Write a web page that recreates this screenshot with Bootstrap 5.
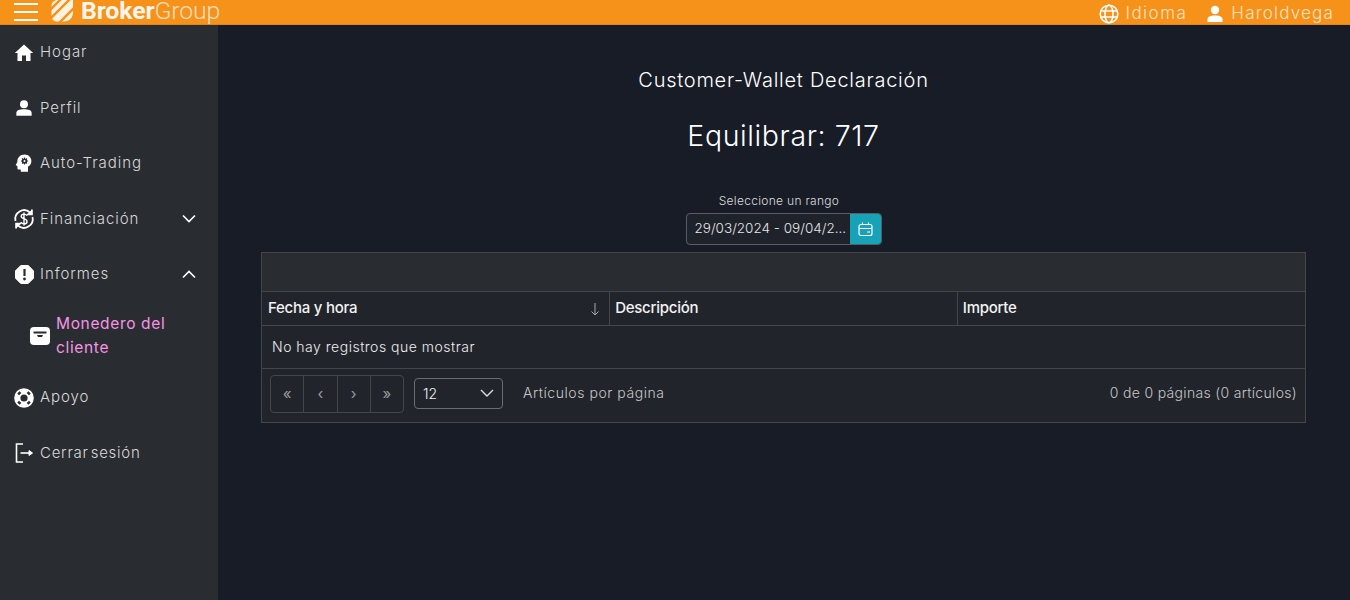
<!DOCTYPE html>
<html lang="es">
<head>
    <meta charset="UTF-8">
    <meta name="viewport" content="width=device-width, initial-scale=1.0">
    <title>Customer-Wallet Declaración</title>
    <link href="https://cdn.jsdelivr.net/npm/bootstrap@5.3.0/dist/css/bootstrap.min.css" rel="stylesheet">
    <style>
        html, body { height: 100%; overflow: hidden; }
        body { background: #181c27; color: #f2f2f2; font-family: "Inter", "Liberation Sans", sans-serif; font-size: 15px; }
        svg { display: block; flex-shrink: 0; }
        .top-bar { height: 25px; background: #f6911a; border-bottom: 1px solid #e0861a; padding: 0 16px 0 14px; }
        .burger { width: 24px; }
        .burger span { display: block; height: 2px; background: #fff; margin-bottom: 6px; }
        .burger span:last-child { margin-bottom: 0; }
        .brand { font-family: "Roboto", "Liberation Sans", sans-serif; font-size: 24.8px; line-height: 22px; color: #fff; margin-left: 13px; margin-top: -2px; letter-spacing: -.1px; }
        .brand b { font-weight: 700; opacity: .92; }
        .brand span { font-weight: 300; opacity: .7; }
        .logo-mark { margin-right: 8px; }
        .top-link { color: #ffe3c2; font-size: 17px; font-weight: 300; letter-spacing: 1.2px; line-height: 21px; padding-top: 3px; }
        .top-link svg { margin-right: 6px; }
        .top-lang { letter-spacing: 1.5px; }
        .top-user { margin-left: 18px; }
        .page-wrap { height: 575px; }
        .side-menu { width: 218px; background: #292d31; flex-shrink: 0; }
        .side-item { height: 55.4px; padding: 0 22px 0 14px; color: #d8d8d8; font-size: 15px; font-weight: 300; letter-spacing: .95px; }
        .side-item .ic { width: 20px; margin-right: 6px; display: flex; justify-content: center; }
        .side-tight { letter-spacing: .75px; word-spacing: -3px; }
        .side-sub { padding: 10px 40px 10px 30px; height: 68px; color: #f794e6; font-size: 15.5px; line-height: 24px; letter-spacing: .65px; font-weight: 400; }
        .side-sub svg { margin-right: 6px; }
        .main-area { min-width: 0; padding: 0 44px 0 43px; }
        .wallet-title { font-size: 20px; font-weight: 300; line-height: 26px; margin: 42px 0 0; letter-spacing: .75px; color: #fff; }
        .wallet-balance { font-size: 28.5px; font-weight: 300; line-height: 38px; margin: 24px 0 0; letter-spacing: .6px; color: #fff; }
        .range-label { font-size: 12px; font-weight: 300; line-height: 16px; margin: 38px 0 4px; padding-right: 9px; letter-spacing: .3px; color: #dcdcdc; }
        .range-box { width: 196px; height: 32px; margin: 0 auto 7px; border: 1px solid #5a5e64; border-radius: 4px; overflow: hidden; background: #1e222b; }
        .range-text { font-size: 13.5px; font-weight: 300; padding-left: 8px; color: #e6e6e6; white-space: nowrap; line-height: 29px; flex: 1; letter-spacing: 0; }
        .range-btn { width: 31px; background: #17a2b8; flex-shrink: 0; }
        .data-box { border: 1px solid #43474c; background: #292d31; }
        .box-toolbar { height: 38px; background: #292d31; }
        .data-table { margin: 0; table-layout: fixed; width: 100%; --bs-table-bg: transparent; --bs-table-color: #f2f2f2; --bs-table-border-color: #43474c; }
        .data-table th { background: #21252b; color: #f2f2f2; height: 34px; padding: 0 5px; font-size: 15px; font-weight: 500; border: 1px solid #43474c; vertical-align: middle; letter-spacing: -.25px; }
        .data-table th:first-child { border-left: 0; padding-left: 6px; }
        .data-table th:last-child { border-right: 0; }
        .data-table td { background: #21252b; height: 42px; padding: 0 10px; font-size: 14px; font-weight: 300; border: 0; vertical-align: middle; letter-spacing: .5px; color: #eee; }
        .box-foot { height: 54px; background: #21252b; border-top: 1px solid #43474c; padding: 0 8px 2px; }
        .pager-group { width: 134px; height: 38px; border: 1px solid #43474c; border-radius: 4px; }
        .pager-group span { flex: 1; display: flex; align-items: center; justify-content: center; color: #9b9b9b; font-size: 15px; border-right: 1px solid #43474c; height: 100%; }
        .pager-group span:last-child { border-right: 0; }
        .size-select { width: 89px; height: 31px; border: 1px solid #6a6e74; border-radius: 4px; margin: 0 0 2px 10px; padding: 0 8px; font-size: 14px; font-weight: 300; color: #f2f2f2; }
        .foot-text { font-size: 14px; font-weight: 300; letter-spacing: .55px; color: #c6c6c6; margin: 0 0 3px 20px; }
        .foot-count { font-size: 14px; font-weight: 300; letter-spacing: .32px; color: #c6c6c6; margin-bottom: 3px; }
    </style>
</head>
<body>
    <header class="top-bar d-flex align-items-center">
        <div class="burger"><span></span><span></span><span></span></div>
        <div class="brand d-flex align-items-center">
            <svg width="22" height="22" viewBox="0 0 22 22" class="logo-mark">
                <path d="M7 0H22V12C22 18 18 21.5 13 21.5H6C2.5 21.5 0.5 19 0.5 16V6C0.5 2.5 3 0 7 0Z" fill="#fff2e0"/>
                <path d="M-2 11L11 -2M-1 19L19 -1M7 24L23 8" stroke="#f6911a" stroke-width="2.4"/>
            </svg>
            <div><b>Broker</b><span>Group</span></div>
        </div>
        <div class="top-link top-lang d-flex align-items-center ms-auto">
            <svg width="20" height="20" viewBox="0 0 20 20" fill="none" stroke="#fff" stroke-width="1.6">
                <circle cx="10" cy="10" r="8.8"/><ellipse cx="10" cy="10" rx="4" ry="8.8"/><path d="M1.5 7H18.5M1.5 13H18.5"/>
            </svg>
            Idioma
        </div>
        <div class="top-link top-user d-flex align-items-center">
            <svg width="20" height="20" viewBox="0 0 20 20" fill="#fff">
                <circle cx="10" cy="6" r="4.2"/><path d="M2.5 18V15.5C2.5 12.8 5 11.5 10 11.5S17.5 12.8 17.5 15.5V18Z"/>
            </svg>
            Haroldvega
        </div>
    </header>

    <div class="page-wrap d-flex">
        <nav class="side-menu">
            <div class="side-item d-flex align-items-center"><span class="ic">
                <svg width="20" height="20" viewBox="0 0 20 20" fill="#fff"><path d="M10 1.5L0.8 10H3.5V18H8V12.5H12V18H16.5V10H19.2Z"/></svg>
            </span>Hogar</div>
            <div class="side-item d-flex align-items-center"><span class="ic">
                <svg width="18" height="18" viewBox="0 0 20 20" fill="#fff"><circle cx="10" cy="5.8" r="4.4"/><path d="M1.5 18.5V15.5C1.5 12.6 5 11.5 10 11.5S18.5 12.6 18.5 15.5V18.5Z"/></svg>
            </span>Perfil</div>
            <div class="side-item d-flex align-items-center"><span class="ic">
                <svg width="18" height="18" viewBox="0 0 18 18"><path d="M9.5 0.5C5.5 0.5 2.4 3.4 2.4 7.2C2.4 8.2 1 10 0.8 11C0.7 11.6 1.5 11.8 2.4 11.9V14.2C2.4 15 3 15.5 3.8 15.5H5.8V17.8H13V12.8C15 11.6 16.4 9.6 16.4 7.2C16.4 3.4 13.5 0.5 9.5 0.5Z" fill="#fff"/><circle cx="9.5" cy="7" r="2.6" fill="#292d31"/><path d="M9.5 3.4V10.6M5.9 7H13.1M7 4.5L12 9.5M12 4.5L7 9.5" stroke="#292d31" stroke-width="1.1"/><circle cx="9.5" cy="7" r="1" fill="#fff"/></svg>
            </span>Auto-Trading</div>
            <div class="side-item d-flex align-items-center justify-content-between">
                <span class="d-flex align-items-center"><span class="ic">
                    <svg width="24" height="24" viewBox="0 0 24 24" fill="none" stroke="#fff" stroke-width="1.8"><path d="M3.5 14A8.8 8.8 0 0 1 18 5.5"/><path d="M20.5 10A8.8 8.8 0 0 1 6 18.5"/><path d="M20 2.5V7.5H15M4 21.5V16.5H9" stroke-width="1.6" fill="#fff"/><path d="M15 8.8C14.4 7.6 13.4 7.1 12 7.1C10.4 7.1 9.2 7.9 9.2 9.3C9.2 12.4 15 11 15 14.4C15 16 13.7 16.9 12 16.9C10.5 16.9 9.4 16.3 8.9 15.1M12 5.4V18.6" stroke-width="1.4"/></svg>
                </span>Financiación</span>
                <svg width="14" height="9" viewBox="0 0 14 9" fill="none" stroke="#fff" stroke-width="1.6"><path d="M1 1.5L7 7.5L13 1.5"/></svg>
            </div>
            <div class="side-item d-flex align-items-center justify-content-between">
                <span class="d-flex align-items-center"><span class="ic">
                    <svg width="19" height="19" viewBox="0 0 19 19"><path d="M5.8 0.5H13.2L18.5 5.8V13.2L13.2 18.5H5.8L0.5 13.2V5.8Z" fill="#fff" stroke="#fff" stroke-linejoin="round"/><path d="M9.5 4V11" stroke="#292d31" stroke-width="2.2"/><circle cx="9.5" cy="14" r="1.4" fill="#292d31"/></svg>
                </span>Informes</span>
                <svg width="14" height="9" viewBox="0 0 14 9" fill="none" stroke="#fff" stroke-width="1.6"><path d="M1 7.5L7 1.5L13 7.5"/></svg>
            </div>
            <div class="side-sub d-flex align-items-center">
                <svg width="20" height="18" viewBox="0 0 20 18" class="flex-shrink-0"><rect x="0" y="0" width="20" height="18" rx="4" fill="#fff"/><path d="M3.5 5.5H16.5" stroke="#292d31" stroke-width="2"/><path d="M7 8H13L12 10H8Z" fill="#292d31"/></svg>
                <span>Monedero del cliente</span>
            </div>
            <div class="side-item d-flex align-items-center"><span class="ic">
                <svg width="20" height="20" viewBox="0 0 20 20"><circle cx="10" cy="10" r="9.8" fill="#fff"/><circle cx="10" cy="10" r="3.6" fill="#292d31"/><path d="M4.4 4.4L6.2 6.2M15.6 4.4L13.8 6.2M4.4 15.6L6.2 13.8M15.6 15.6L13.8 13.8" stroke="#292d31" stroke-width="3.2"/></svg>
            </span>Apoyo</div>
            <div class="side-item side-tight d-flex align-items-center"><span class="ic">
                <svg width="19" height="20" viewBox="0 0 19 20" fill="none" stroke="#fff" stroke-width="1.6"><path d="M8 1H1.5V19H8"/><path d="M5.5 10H17"/><path d="M14 7.5L17.5 10L14 12.5Z" fill="#fff" stroke-width="1"/></svg>
            </span>Cerrar sesión</div>
        </nav>

        <main class="main-area flex-grow-1 text-center">
            <h2 class="wallet-title">Customer-Wallet Declaración</h2>
            <h1 class="wallet-balance">Equilibrar: 717</h1>
            <div class="range-label">Seleccione un rango</div>
            <div class="range-box d-flex">
                <div class="range-text text-start">29/03/2024 - 09/04/2...</div>
                <div class="range-btn d-flex align-items-center justify-content-center">
                    <svg width="15" height="15" viewBox="0 0 15 15" fill="none" stroke="#fff" stroke-width="1.2"><rect x="1" y="2.5" width="13" height="11" rx="2"/><path d="M1 6.5H14M4.5 0.5V3M10.5 0.5V3M9 10H12"/></svg>
                </div>
            </div>

            <div class="data-box text-start">
                <div class="box-toolbar"></div>
                <table class="table data-table">
                    <thead>
                        <tr>
                            <th><div class="d-flex justify-content-between align-items-center">Fecha y hora
                                <svg width="10" height="14" viewBox="0 0 10 14" fill="none" stroke="#aaa" class="me-1"><path d="M5 1V13M1.5 9.5L5 13L8.5 9.5"/></svg></div></th>
                            <th>Descripción</th>
                            <th>Importe</th>
                        </tr>
                    </thead>
                    <tbody>
                        <tr><td colspan="3">No hay registros que mostrar</td></tr>
                    </tbody>
                </table>
                <div class="box-foot d-flex align-items-center">
                    <div class="pager-group d-flex">
                        <span>«</span><span>‹</span><span>›</span><span>»</span>
                    </div>
                    <div class="size-select d-flex align-items-center justify-content-between">12
                        <svg width="14" height="8" viewBox="0 0 14 8" fill="none" stroke="#ddd" stroke-width="1.4"><path d="M1 1L7 7L13 1"/></svg>
                    </div>
                    <div class="foot-text">Artículos por página</div>
                    <div class="foot-count ms-auto">0 de 0 páginas (0 artículos)</div>
                </div>
            </div>
        </main>
    </div>

    <script src="https://cdn.jsdelivr.net/npm/bootstrap@5.3.0/dist/js/bootstrap.bundle.min.js"></script>
</body>
</html>
